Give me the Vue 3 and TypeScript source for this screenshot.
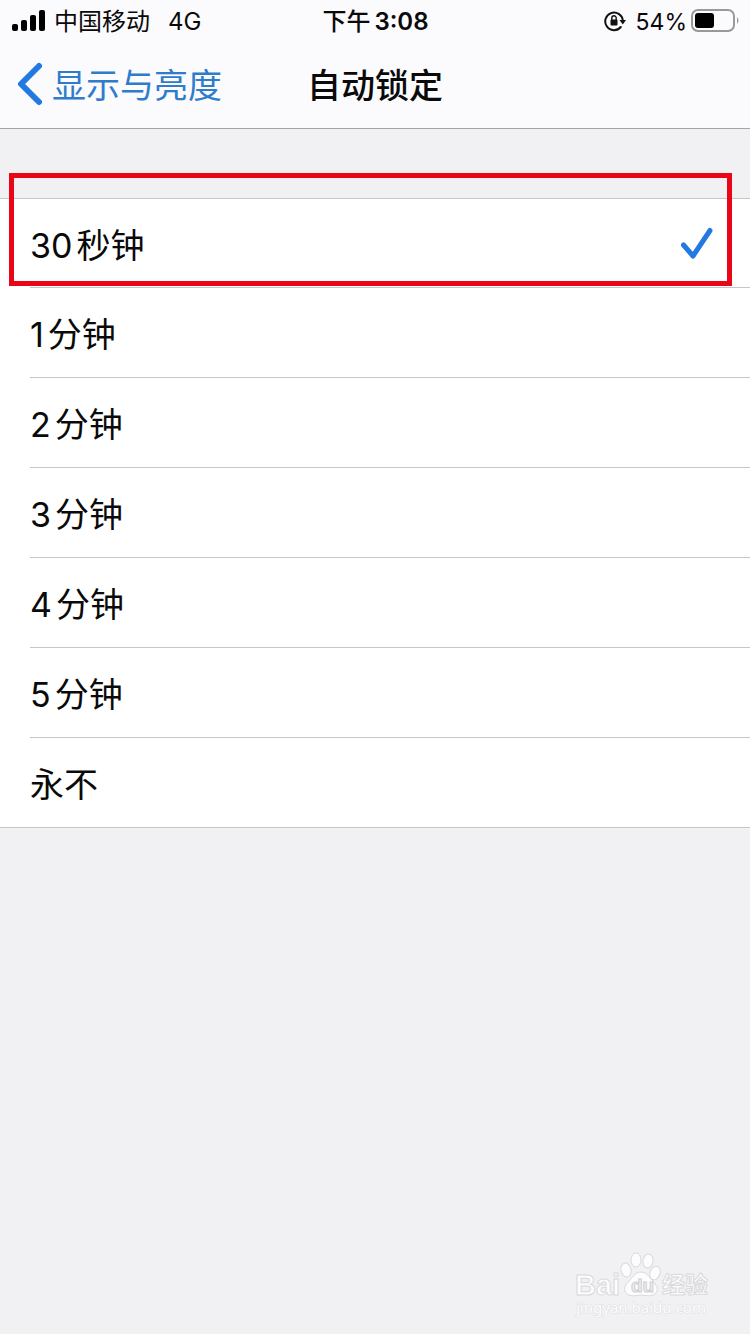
<script setup lang="ts">
import { ref } from 'vue'

interface LockOption {
  id: string
  count?: string
  unit: string
}

const options: LockOption[] = [
  { id: '30s', count: '30', unit: '秒钟' },
  { id: '1m', count: '1', unit: '分钟' },
  { id: '2m', count: '2', unit: '分钟' },
  { id: '3m', count: '3', unit: '分钟' },
  { id: '4m', count: '4', unit: '分钟' },
  { id: '5m', count: '5', unit: '分钟' },
  { id: 'never', unit: '永不' },
]

const selected = ref('30s')
const highlighted = '30s'
</script>

<template>
  <div class="screen">
    <header class="top">
      <div class="status">
        <div class="status-left">
          <svg class="signal" width="34" height="22" viewBox="0 0 34 22" aria-hidden="true">
            <rect x="0" y="14" width="6" height="7" rx="2" />
            <rect x="9" y="10" width="6" height="11" rx="2" />
            <rect x="18" y="5" width="6" height="16" rx="2" />
            <rect x="27" y="0" width="6" height="21" rx="2" />
          </svg>
          <span>中国移动</span>
          <span class="network">4G</span>
        </div>
        <div class="clock"><span>下午</span><span>3:08</span></div>
        <div class="status-right">
          <svg class="rotation" width="22" height="22" viewBox="0 0 22 22" aria-hidden="true">
            <path d="M16.8 17A8.8 8.8 0 1 1 18.8 10.5" fill="none" stroke="#111" stroke-width="2" stroke-linecap="round" />
            <path d="M15.5 10H22L18.8 14.4Z" fill="#111" />
            <rect x="6.5" y="9.5" width="7" height="6" rx="1" fill="#111" />
            <path d="M7.8 10V8a2.2 2.2 0 0 1 4.4 0V10" fill="none" stroke="#111" stroke-width="1.4" />
          </svg>
          <span class="percent">54%</span>
          <svg class="battery" width="48" height="24" viewBox="0 0 48 24" aria-hidden="true">
            <rect x="1" y="1" width="42" height="21" rx="6" fill="none" stroke="#999" stroke-width="2" />
            <rect x="4" y="4" width="19" height="15" rx="3" fill="#000" />
            <path d="M46 8Q49 11.5 46 15Z" fill="#999" />
          </svg>
        </div>
      </div>
      <nav class="nav">
        <button class="back" type="button">
          <svg width="26" height="44" viewBox="0 0 26 44" aria-hidden="true">
            <path d="M23 4L5 22L23 40" fill="none" stroke="#2279e2" stroke-width="6" stroke-linecap="round" stroke-linejoin="round" />
          </svg>
          <span>显示与亮度</span>
        </button>
        <h1>自动锁定</h1>
      </nav>
    </header>

    <main>
      <ul class="list">
        <li v-for="option in options" :key="option.id" class="row">
          <label :for="option.id">
            <input :id="option.id" v-model="selected" type="radio" name="auto-lock" :value="option.id" />
            <span v-if="option.count">{{ option.count }}</span>
            <span>{{ option.unit }}</span>
            <svg v-if="selected === option.id" class="tick" width="34" height="34" viewBox="0 0 34 34" aria-hidden="true">
              <path d="M3.5 19L13 30L30 4.5" fill="none" stroke="#2279e2" stroke-width="5" stroke-linecap="round" stroke-linejoin="round" />
            </svg>
          </label>
          <div v-if="option.id === highlighted" class="marker"></div>
        </li>
      </ul>
    </main>

    <svg class="watermark" width="150" height="68" viewBox="0 0 150 68" aria-hidden="true">
      <g fill="#fcfcfd" stroke="#d9d9dc" stroke-width="1">
        <text class="brand" x="5" y="45">Bai</text>
        <ellipse cx="56" cy="20" rx="5" ry="7" transform="rotate(-12 56 20)" />
        <ellipse cx="66" cy="10" rx="5" ry="7" />
        <ellipse cx="78" cy="11" rx="5" ry="7" transform="rotate(8 78 11)" />
        <ellipse cx="85" cy="23" rx="5" ry="7" transform="rotate(20 85 23)" />
        <path d="M71 22C65 22 63 27 59 31C55 35 54 38 55 41C57 47 64 46 71 45C78 46 85 47 87 41C88 38 86 35 83 31C79 27 77 22 71 22Z" />
        <text class="paw-text" x="61" y="42">du</text>
        <text class="brand-cn" x="92" y="43">经验</text>
      </g>
      <text class="site" x="6" y="63">jingyan.baidu.com</text>
    </svg>
  </div>
</template>

<style>
body {
  margin: 0;
  background: #f1f1f4;
}
</style>

<style scoped>
.screen {
  position: relative;
  min-height: 100vh;
  background: #f1f1f4;
  color: #0a0a0a;
  font-family: Inter, "Noto Sans CJK SC", sans-serif;
}

.top {
  background: #fbfbfd;
  border-bottom: 1px solid #a5a5a9;
}

.status {
  display: grid;
  grid-template-columns: 1fr auto 1fr;
  align-items: center;
  height: 40px;
  padding: 0 11px 0 12px;
  font-size: 24px;
  line-height: 40px;
}

.status-left,
.status-right,
.clock {
  display: flex;
  align-items: center;
}

.status span {
  padding-top: 3px;
  line-height: 38px;
}

.status-left {
  gap: 8px;
}

.network {
  margin-left: 10px;
}

.clock {
  gap: 4px;
  font-weight: 600;
}

.clock span:first-child {
  font-weight: 500;
}

.status-right {
  justify-content: flex-end;
}

.rotation {
  margin-right: 10px;
}

.percent {
  font-size: 23px;
}

.battery {
  margin-left: 4px;
}

.nav {
  display: grid;
  grid-template-columns: 1fr auto 1fr;
  align-items: center;
  height: 88px;
  padding: 0 16px;
}

.back {
  display: flex;
  align-items: center;
  justify-self: start;
  gap: 10px;
  padding: 0;
  border: 0;
  background: none;
  color: #2f7ccb;
  font: inherit;
  font-size: 34px;
  line-height: 48px;
}

.back span,
h1 {
  padding-top: 3px;
}

h1 {
  margin: 0;
  font-size: 34px;
  font-weight: 500;
  line-height: 48px;
}

.list {
  margin: 69px 0 0;
  padding: 0;
  list-style: none;
  background: #fff;
  border-bottom: 1px solid #c6c6ca;
}

.row {
  position: relative;
  padding-left: 30px;
}

.row:first-child {
  border-top: 1px solid #c6c6ca;
}

.row label {
  display: flex;
  align-items: center;
  gap: 4px;
  height: 89px;
  padding-right: 36px;
  border-bottom: 1px solid #c6c6ca;
  font-size: 34px;
  line-height: 48px;
}

.row:first-child label {
  height: 88px;
}

.row:last-child label {
  border-bottom: 0;
}

.row label span {
  padding-top: 5px;
}

.row input {
  position: absolute;
  margin: 0;
  opacity: 0;
}

.tick {
  margin-left: auto;
}

.marker {
  position: absolute;
  inset: -26px 18px 2px 9px;
  border: 5px solid #ea0617;
  pointer-events: none;
}

.watermark {
  position: absolute;
  right: 30px;
  bottom: 16px;
}

.brand {
  font: bold 29px "Liberation Sans", sans-serif;
}

.paw-text {
  font: bold 19px "Liberation Sans", sans-serif;
  fill: #ececef;
  stroke: #cfcfd3;
}

.brand-cn {
  font: bold 23px "Noto Sans CJK SC", sans-serif;
}

.site {
  font: 15px "Noto Sans", sans-serif;
  fill: #fcfcfd;
  stroke: #dcdcdf;
  stroke-width: 1px;
  paint-order: stroke;
}
</style>
